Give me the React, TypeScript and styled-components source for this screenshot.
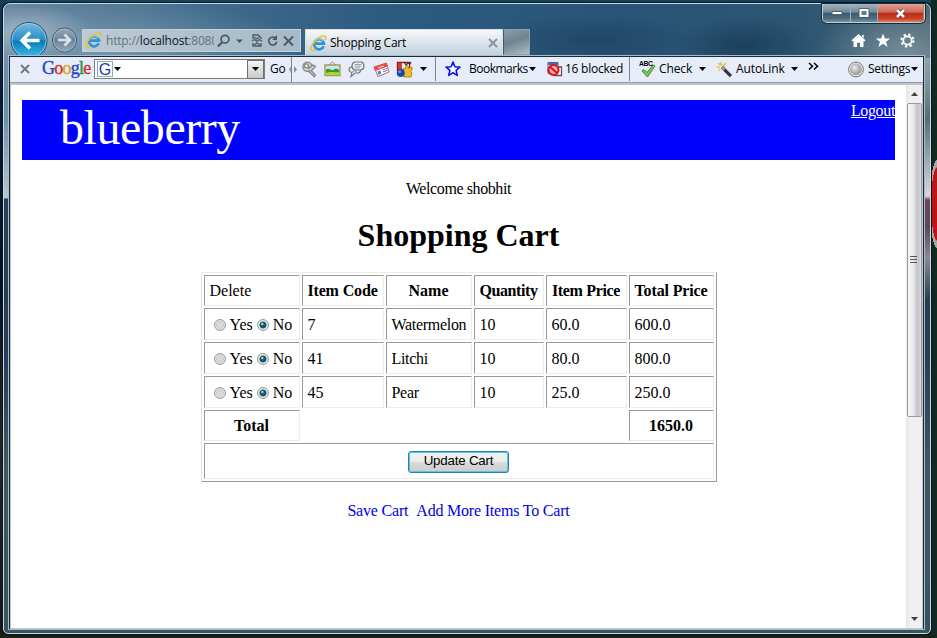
import React from 'react';
import styled, { createGlobalStyle, css } from 'styled-components';

const GlobalStyle = createGlobalStyle`
  *, *::before, *::after { box-sizing: border-box; }
  html, body { margin: 0; width: 937px; height: 638px; overflow: hidden; }
  svg { display: block; flex: none; }
`;

const Desktop = styled.div`
  width: 937px;
  height: 638px;
  padding: 3px 6px 4px 3px;
  background:
    radial-gradient(ellipse 7px 44px at 937px 204px, #c01318 0 82%, #a9a3a3 84% 100%, transparent 100%),
    linear-gradient(90deg, transparent 931px, #102a20 931px),
    linear-gradient(180deg, #12475d 0, #123854 6px, #0b1c38 90px, #07101f 280px, #28241e 440px, #191714 630px, #1b2117 638px);
`;

const Window = styled.div`
  width: 928px;
  height: 631px;
  display: flex;
  flex-direction: column;
  padding: 0 6px 5px 5px;
  border: 1px solid #c8dce5;
  border-radius: 7px 7px 5px 5px;
  box-shadow: 0 0 0 1px #071522;
  background:
    radial-gradient(ellipse 70px 28px at 20px 28px, rgba(176, 193, 205, .75), transparent),
    radial-gradient(ellipse 190px 50px at 110px 45px, rgba(153, 180, 199, .5), transparent),
    radial-gradient(ellipse 110px 26px at 590px 36px, rgba(22, 52, 82, .45), transparent),
    radial-gradient(ellipse 70px 30px at 740px 42px, rgba(12, 43, 65, .5), transparent),
    radial-gradient(ellipse 90px 60px at 900px 55px, rgba(152, 171, 181, .65), transparent),
    linear-gradient(90deg, #64849d 0, #416b8c 200px, #2d5b80 380px, #285577 620px, #2c5673 790px, #46616d 928px) 0 0 / 100% 54px no-repeat,
    linear-gradient(180deg, #83989c, #526e70 60px, #b9bfc4 118px, #dcd3da 138px, #6e4459 142px, #5c4a58 170px, #8e8793 200px, #2c454b 240px) 100% 54px / 7px 240px no-repeat,
    linear-gradient(180deg, #5d7e9c 0, #6d90aa 115px, #b7c7cd 194px, #293f58 195px, #273d54 350px, #44565f 465px, #36565b 631px);
`;

const TitleBar = styled.header`
  height: 52px;
  flex: none;
`;

const CaptionRow = styled.div`
  height: 20px;
  display: flex;
  justify-content: flex-end;
  margin-right: -1px;
`;

const CaptionButtons = styled.div`
  width: 103px;
  height: 19px;
  display: flex;
  border: 1px solid #bdcdd5;
  border-top: 0;
  border-radius: 0 0 5px 5px;
  overflow: hidden;
  box-shadow: 0 0 0 1px #172c3c;
`;

const CaptionButton = styled.span<{ $w: number; $close?: boolean }>`
  width: ${p => p.$w}px;
  flex: none;
  display: flex;
  align-items: center;
  justify-content: center;
  border-right: 1px solid ${p => (p.$close ? '#cc7b6f' : '#a0b2bc')};
  background: ${p => p.$close
    ? 'linear-gradient(180deg, #e0a497 0, #cf6752 46%, #b92d16 50%, #c93f26 80%, #df8061)'
    : 'linear-gradient(180deg, #a5b4bd 0, #71899a 46%, #395971 50%, #4b6c80 80%, #7994a1)'};
`;

const NavRow = styled.div`
  height: 32px;
  display: flex;
  align-items: flex-start;
  padding-left: 1px;
`;

const BackSlot = styled.div`
  width: 41px;
  height: 35px;
  overflow: hidden;
  margin-top: -3px;
`;

const ForwardSlot = styled.div`
  width: 31px;
  padding-top: 2px;
`;

const uiText = css`
  font-family: "Open Sans", "Noto Sans", sans-serif;
  font-size: 12px;
  line-height: 16px;
  white-space: pre;
`;

const AddressBar = styled.div`
  width: 219px;
  height: 23px;
  margin-top: 5px;
  border: 1px solid #c5d2da;
  display: flex;
  align-items: center;
  padding-left: 2px;
  background: linear-gradient(90deg, #bccbd5, #adc0ce 60%, #a7bac9);
`;

const Url = styled.div`
  ${uiText}
  width: 108px;
  margin-left: 4px;
  overflow: hidden;
  color: #66727c;
  letter-spacing: -0.2px;
  b { font-weight: 400; color: #10151a; }
`;

const BarIcons = styled.div`
  display: flex;
  align-items: center;
  margin-left: 2px;
`;

const Tab = styled.div`
  width: 198px;
  height: 27px;
  margin: 5px 0 0 4px;
  display: flex;
  align-items: center;
  padding: 0 4px 0 4px;
  border: 1px solid #d5e0e7;
  border-bottom: 0;
  background: linear-gradient(180deg, #f5f8fa 0, #dde6ee 45%, #c0cfdb 100%);
`;

const TabTitle = styled.span`
  ${uiText}
  flex: 1;
  margin-left: 3px;
  color: #000;
  letter-spacing: -0.25px;
`;

const NewTab = styled.div`
  width: 27px;
  height: 26px;
  margin-top: 5px;
  border: 1px solid #8da1af;
  border-left-color: #435b6c;
  background: linear-gradient(160deg, #8d9da9 0, #6e8290 45%, #b0bec6 100%);
`;

const BrowserIcons = styled.div`
  flex: 1;
  display: flex;
  justify-content: flex-end;
  gap: 9px;
  padding: 9px 9px 0 0;
`;

const Client = styled.div`
  width: 915px;
  height: 573px;
  flex: none;
  display: flex;
  flex-direction: column;
  border: 1px solid #142a3d;
  box-shadow: 0 0 0 1px #a9bdc8;
  background: #fff;
`;

const Toolbar = styled.div`
  height: 26px;
  flex: none;
  display: flex;
  align-items: center;
  background: #e6edf9;
  border-bottom: 1px solid #929aa4;
  padding: 0 0 1px 10px;
`;

const Slot = styled.div<{ $w: number }>`
  width: ${p => p.$w}px;
  flex: none;
  display: flex;
  align-items: center;
`;

const Label = styled.span<{ $ls?: number }>`
  ${uiText}
  color: #000;
  letter-spacing: ${p => p.$ls ?? -0.1}px;
`;

const GoogleWord = styled.span`
  font: 18px/20px "Liberation Serif", serif;
  -webkit-text-stroke: .4px currentColor;
  letter-spacing: -.75px;
  white-space: nowrap;
  margin-top: -2px;
`;

const Letter = styled.span<{ $c: string }>`
  color: ${p => p.$c};
`;

const SearchBox = styled.div`
  width: 171px;
  height: 20px;
  display: flex;
  align-items: center;
  border: 1px solid #7d7d7d;
  background: #fff;
  padding-left: 2px;
`;

const GBadge = styled.span`
  width: 16px;
  height: 16px;
  border: 1px solid #8fb795;
  border-left-color: #879ce0;
  font: 16px/15px "Liberation Sans", sans-serif;
  text-align: center;
  color: #1d38b8;
  margin-right: 1px;
`;

const DropButton = styled.span`
  width: 17px;
  height: 19px;
  margin-left: auto;
  display: flex;
  align-items: center;
  justify-content: center;
  border: 1px solid #707070;
  background: linear-gradient(180deg, #f3f3f3, #dedede 50%, #cacaca);
`;

const Separator = styled.i`
  width: 1px;
  height: 24px;
  background: #7d828b;
`;

const Viewport = styled.div`
  flex: 1;
  display: flex;
  border: 1px solid #c1c4c6;
  border-top: 2px solid #c1c4c6;
`;

const Page = styled.main`
  width: 895px;
  height: 542px;
  flex: none;
  padding: 15px 11px 0;
  background: #fff;
  color: #000;
  font: 16px/18px "Liberation Serif", serif;
  display: flex;
  flex-direction: column;
  align-items: center;
`;

const Banner = styled.div`
  width: 873px;
  height: 60px;
  flex: none;
  display: flex;
  justify-content: space-between;
  background: #00f;
  color: #fff;
  padding: 2px 0 0 38px;
`;

const Brand = styled.span`
  font-size: 48px;
  line-height: 52px;
  letter-spacing: -0.45px;
`;

const Logout = styled.a`
  text-decoration: underline;
  height: 18px;
  letter-spacing: -0.35px;
`;

const Welcome = styled.p`
  margin: 20px 0 0;
  letter-spacing: -0.4px;
`;

const Heading = styled.h1`
  margin: 19px 0 0;
  font-size: 32px;
  line-height: 37px;
`;

const CartTable = styled.div`
  width: 516px;
  height: 210px;
  flex: none;
  margin-top: 18px;
  padding: 2px;
  display: grid;
  grid-template-columns: 96px 82px 86px 70px 81px 85px;
  grid-template-rows: 31px 32px 32px 32px 31px 36px;
  gap: 2px;
  border: 1px solid;
  border-color: #ececec #999 #999 #e4e4e4;
`;

const Cell = styled.div<{ $head?: boolean; $span?: number; $bare?: boolean; $ls?: number }>`
  display: flex;
  align-items: center;
  white-space: pre;
  padding: 1px 5px 0;
  border: 1px solid;
  border-color: #999 #ececec #ececec #999;
  letter-spacing: ${p => p.$ls ?? 0}px;
  ${p => p.$head && css`font-weight: 700; justify-content: center;`}
  ${p => p.$span && css`grid-column: span ${p.$span};`}
  ${p => p.$bare && css`border-color: transparent;`}
`;

const Choice = styled.span`
  display: flex;
  align-items: center;
  gap: 4px;
  margin-left: 4px;
  & + & { margin-left: 4px; }
`;

const UpdateButton = styled.button`
  width: 101px;
  height: 22px;
  padding: 0 0 1px;
  border: 1px solid #2c7fa9;
  border-radius: 3px;
  box-shadow: inset 0 0 0 1px #54c6ec;
  background: linear-gradient(180deg, #f3f3f3 0, #ebebeb 48%, #dadada 50%, #cdcdcd);
  color: #000;
  font: 13.33px/18px "Liberation Sans", sans-serif;
  letter-spacing: -.2px;
`;

const CartLinks = styled.div`
  display: flex;
  gap: 8px;
  margin-top: 20px;
`;

const CartLink = styled.a`
  color: #0000e0;
  letter-spacing: -0.2px;
`;

const ScrollTrack = styled.div`
  width: 16px;
  height: 543px;
  flex: none;
  display: flex;
  flex-direction: column;
  align-items: center;
  background: linear-gradient(90deg, #e9e9e9, #f1f1f1 30%, #efefef);
`;

const ScrollArrow = styled.div`
  height: 18px;
  display: flex;
  align-items: center;
  justify-content: center;
`;

const ScrollThumb = styled.div`
  width: 15px;
  height: 314px;
  border: 1px solid #999;
  border-radius: 2px;
  display: flex;
  align-items: center;
  justify-content: center;
  background: linear-gradient(90deg, #f7f7f7, #e8e8ea 48%, #cfcfd5 55%, #c4c4cb 80%, #dedee2);
`;

const ScrollEnd = styled(ScrollArrow)`
  margin-top: auto;
`;

const Caret = ({ color = '#000' }: { color?: string }) => (
  <svg width="7" height="4" viewBox="0 0 7 4"><path d="M0 0h7L3.5 4z" fill={color} /></svg>
);

const Cross = ({ color }: { color: string }) => (
  <svg width="10" height="10" viewBox="0 0 10 10"><path d="M1 1l8 8M9 1L1 9" stroke={color} strokeWidth="1.9" /></svg>
);

const IeLogo = () => (
  <svg width="17" height="17" viewBox="0 0 17 17" fill="none">
    <path d="M13.7 11.2A5 5 0 1 1 14 8.6H5.5" stroke="#2d93d3" strokeWidth="2.6" />
    <path d="M4 8a5.2 5.2 0 0 1 9.2-2.2" stroke="#7cd0f5" strokeWidth="1.3" />
    <path d="M15.2 5.1C16.3 2.5 15.4.8 12.8 1 9 1.6 1.8 8.3 1.1 13c-.4 2.5 1.4 3.2 4.2 1.9" stroke="#edc02a" strokeWidth="1.6" />
  </svg>
);

const BackIcon = () => (
  <svg width="39" height="39" viewBox="0 0 39 39">
    <defs>
      <linearGradient id="back" x2="0" y2="1">
        <stop stopColor="#78bde0" /><stop offset=".47" stopColor="#278dc8" /><stop offset=".52" stopColor="#087bb9" /><stop offset="1" stopColor="#3fc3ef" />
      </linearGradient>
    </defs>
    <circle cx="19" cy="19.5" r="18" fill="url(#back)" stroke="#204c6d" />
    <circle cx="19" cy="19.5" r="17" fill="none" stroke="#a4d6ed" strokeWidth=".8" />
    <path d="M29.5 19.5H11.5M20 11.5l-8 8 8 8" fill="none" stroke="#fff" strokeWidth="3.5" />
  </svg>
);

const ForwardIcon = () => (
  <svg width="27" height="27" viewBox="0 0 27 27">
    <defs>
      <linearGradient id="forward" x2="0" y2="1"><stop stopColor="#9babb7" /><stop offset=".5" stopColor="#6b8498" /><stop offset="1" stopColor="#90aabd" /></linearGradient>
    </defs>
    <circle cx="13.5" cy="14" r="12" fill="url(#forward)" stroke="#435d72" />
    <circle cx="13.5" cy="14" r="11" fill="none" stroke="#b0c0cb" strokeWidth=".7" />
    <path d="M7 14h12M13.5 8.5L19 14l-5.5 5.5" fill="none" stroke="#dce4ea" strokeWidth="2.5" />
  </svg>
);

const AddressIcons = () => (
  <svg width="80" height="18" viewBox="0 0 80 18" fill="none" stroke="#4d5962" strokeWidth="1.7">
    <circle cx="9" cy="7.2" r="3.9" /><path d="M6.2 10.2L1.8 14.5" strokeWidth="2.2" />
    <path d="M20 7.5h7L23.5 11z" fill="#4d5962" stroke="none" />
    <path d="M37 7V3h5l3 2.5V7M37 11v3h8v-3" strokeWidth="1.3" /><path d="M36 9l2.5-1.5L41 9.5 43.5 7.5 46 9.3M38 5l3 2 2-2M38 13l3-2 3 2" strokeWidth="1.1" />
    <path d="M59.6 6.2A4 4 0 1 0 60.7 9.6" /><path d="M61 3v5h-5z" fill="#4d5962" stroke="none" />
    <path d="M68 4.5l9 9M77 4.5l-9 9" strokeWidth="1.9" />
  </svg>
);

const HomeIcon = () => (
  <svg width="15" height="15" viewBox="0 0 15 15"><path d="M7.5 1l7 6.2-1.2 1.2L12.5 8v6H9V9.8H6V14H2.5V8l-.8.5L.5 7.2zM11 2h1.7v3L11 3.5z" fill="#fff" /></svg>
);

const StarIcon = () => (
  <svg width="16" height="15" viewBox="0 0 16 15"><path d="M8 .5l1.9 5h5.4l-4.3 3.2 1.6 5.2L8 10.8l-4.6 3.1L5 8.7.7 5.5h5.4z" fill="#fff" /></svg>
);

const GearIcon = () => (
  <svg width="15" height="15" viewBox="0 0 15 15" fill="none" stroke="#fff">
    <circle cx="7.5" cy="7.5" r="6" strokeWidth="2.1" strokeDasharray="2.35 2.36" />
    <circle cx="7.5" cy="7.5" r="4.2" strokeWidth="1.8" />
  </svg>
);

const KeyIcon = () => (
  <svg width="17" height="17" viewBox="0 0 17 17" fill="#d2d2d2" stroke="#858585" strokeWidth="1.3">
    <path d="M8.5 8l6 6-1.2 1.8-6.8-6.5z" />
    <circle cx="6.5" cy="5.7" r="4.6" /><circle cx="5.5" cy="4.8" r="2" fill="#fff" /><path d="M7 8l5-4 2.5 1.5-4 4" />
  </svg>
);

const PhotoIcon = () => (
  <svg width="17" height="16" viewBox="0 0 17 16">
    <path d="M5 4l3.5-3L12 4" fill="none" stroke="#888" />
    <path d="M1 4h15v10.5H1z" fill="#c3e8f4" stroke="#a99c4b" strokeWidth="1.4" />
    <path d="M2 9c3-3 5 1 7 0 2-2 4-2 6 0v5H2z" fill="#37992e" /><path d="M2 12c4-2 8 0 13-1v3H2z" fill="#a8da32" />
  </svg>
);

const ChatIcon = () => (
  <svg width="17" height="17" viewBox="0 0 17 17" fill="#eef0f3" stroke="#6d747c" strokeWidth="1.1">
    <path d="M4.500 5.500h5.500c4 1 3 6 0 6.500H7l-4 3.500 1-4C0 10.500 0 6.500 4.500 5.500z" />
    <path d="M7 1h6c4 1 4 7 0 8H7C3 8 3 2 7 1z" />
    <path d="M6.500 3.500h7M6.500 5.200h7M7 7h5M4 10.300h5" stroke="#8a8f95" strokeWidth=".8" />
  </svg>
);

const CardIcon = () => (
  <svg width="17" height="15" viewBox="0 0 17 15">
    <path d="M1 5L13.500 1l2.500 9-11 4.500z" fill="#fff" stroke="#b5676a" /><path d="M1 5L13.500 1l1 3.600L2.300 9z" fill="#e84c42" />
    <path d="M4.500 9.600l3-1 .8 3.200-3 1z" fill="#577fcb" /><path d="M9.500 8l4.500-1.600M10 9.800l4.500-1.500" stroke="#8a6cae" /><path d="M5 6l6-2" stroke="#ffe0d8" />
  </svg>
);

const GadgetIcon = () => (
  <svg width="18" height="17" viewBox="0 0 18 17">
    <path d="M1.500 1.500h12v8h-12z" fill="#fff" stroke="#8d2118" strokeWidth="1.400" /><path d="M2 2h4v7H2z" fill="#d83a2e" />
    <path d="M7 7l2.500 1V5.500c2-2.500 3.500 0 2.500 2l4-1.500v3c-2 1-1.500 2 0 2.500l-1 4.500H8z" fill="#f2bc24" stroke="#a97112" strokeWidth=".8" />
    <circle cx="4.800" cy="12" r="4" fill="#1746b0" /><circle cx="3.700" cy="10.700" r="1.300" fill="#7ea9f0" />
    <path d="M8 1l2 3 2-2 2 1 1-2" fill="none" stroke="#333" strokeWidth="1.200" />
  </svg>
);

const BlueStar = () => (
  <svg width="16" height="16" viewBox="0 0 16 16"><path d="M8 1l1.900 4.700 5 .4-3.800 3.300 1.200 5L8 11.800l-4.300 2.600 1.200-5L1.100 6.100l5-.4z" fill="#fff" stroke="#0b13e0" strokeWidth="1.600" strokeLinejoin="round" /></svg>
);

const BlockedIcon = () => (
  <svg width="17" height="16" viewBox="0 0 17 16" fill="none">
    <path d="M2 1.500h10v11H2z" fill="#fff" stroke="#555f91" /><path d="M2 2h10v2H2z" fill="#4868bd" /><path d="M10 6h5.500v8.500H9z" fill="#fff" stroke="#714751" strokeWidth="1.300" />
    <circle cx="7.500" cy="9" r="5" fill="#f5b3ae" stroke="#d8161b" strokeWidth="2.100" /><path d="M4 5.700l7.500 6.800" stroke="#d8161b" strokeWidth="2.100" />
  </svg>
);

const CheckIcon = () => (
  <svg width="18" height="18" viewBox="0 0 18 18">
    <text x="0" y="6.200" fontFamily="Liberation Sans, sans-serif" fontSize="6.800" fontWeight="700" textLength="14">ABC</text>
    <path d="M3 11l2-1.500 3 3L14 5l2 1-7.500 11z" fill="#79c957" stroke="#357a2b" strokeWidth=".9" />
  </svg>
);

const WandIcon = () => (
  <svg width="17" height="17" viewBox="0 0 17 17" fill="none">
    <path d="M6 6l9 9" stroke="#333" strokeWidth="3.400" /><path d="M6 6l2.500 2.500" stroke="#999" strokeWidth="3.400" /><path d="M9 7l6.500 6.500" stroke="#9a9a9a" />
    <path d="M5 1v4M1 6h3M8 3L7 5M2 2l2 2M3 10l1-2M10 2L8 4" stroke="#e2c544" strokeWidth="1.500" />
  </svg>
);

const OrbIcon = () => (
  <svg width="17" height="17" viewBox="0 0 17 17">
    <defs><radialGradient id="orb" cx=".38" cy=".35"><stop stopColor="#efefef" /><stop offset="1" stopColor="#a6a6a6" /></radialGradient></defs>
    <circle cx="8" cy="8.500" r="7.400" fill="#e9e9e9" stroke="#777" /><circle cx="8" cy="8.500" r="5.600" fill="url(#orb)" stroke="#aaa" strokeWidth=".7" />
  </svg>
);

const Radio = ({ on }: { on?: boolean }) => (
  <svg width="12" height="12" viewBox="0 0 12 12">
    <circle cx="6" cy="6" r="5.400" fill="#f7f7f7" stroke="#858b91" />
    <circle cx="6" cy="6" r="3.700" fill={on ? '#e2eaef' : '#d9dadb'} stroke="#bbc0c3" strokeWidth=".7" />
    {on && <><circle cx="6" cy="6" r="3" fill="#155a7b" stroke="#153951" strokeWidth=".8" /><circle cx="5.300" cy="5" r="1.200" fill="#8ddcf0" /></>}
  </svg>
);

const googleLetters: [string, string][] = [['G', '#2449c8'], ['o', '#d22f2d'], ['o', '#d9a51d'], ['g', '#2449c8'], ['l', '#20923b'], ['e', '#d22f2d']];
const headings: [string, number][] = [['Item Code', -0.15], ['Name', 0], ['Quantity', -0.4], ['Item Price', -0.35], ['Total Price', -0.15]];
const items = [
  ['7', 'Watermelon', '10', '60.0', '600.0'],
  ['41', 'Litchi', '10', '80.0', '800.0'],
  ['45', 'Pear', '10', '25.0', '250.0'],
];

const GoogleToolbar = () => (
  <Toolbar>
    <Slot $w={22}><Cross color="#777" /></Slot>
    <Slot $w={52}><GoogleWord>{googleLetters.map(([ch, c], i) => <Letter key={i} $c={c}>{ch}</Letter>)}</GoogleWord></Slot>
    <Slot $w={176}>
      <SearchBox><GBadge>G</GBadge><Caret /><DropButton><Caret /></DropButton></SearchBox>
    </Slot>
    <Slot $w={19}><Label>Go</Label></Slot>
    <Slot $w={12}>
      <svg width="8" height="25" viewBox="0 0 8 25"><path d="M2.500 0v25" stroke="#7d828b" /><path d="M1.800 9v7L0 12.500zM5 9v7l3-3.500z" fill="#8b8d93" /></svg>
    </Slot>
    <Slot $w={23}><KeyIcon /></Slot>
    <Slot $w={24}><PhotoIcon /></Slot>
    <Slot $w={25}><ChatIcon /></Slot>
    <Slot $w={23}><CardIcon /></Slot>
    <Slot $w={24}><GadgetIcon /></Slot>
    <Slot $w={15}><Caret /></Slot>
    <Slot $w={10}><Separator /></Slot>
    <Slot $w={24}><BlueStar /></Slot>
    <Slot $w={60}><Label $ls={-0.5}>Bookmarks</Label></Slot>
    <Slot $w={17}><Caret /></Slot>
    <Slot $w={19}><BlockedIcon /></Slot>
    <Slot $w={64}><Label $ls={-0.25}>16 blocked</Label></Slot>
    <Slot $w={10}><Separator /></Slot>
    <Slot $w={20}><CheckIcon /></Slot>
    <Slot $w={40}><Label>Check</Label></Slot>
    <Slot $w={17}><Caret /></Slot>
    <Slot $w={20}><WandIcon /></Slot>
    <Slot $w={55}><Label>AutoLink</Label></Slot>
    <Slot $w={17}><Caret /></Slot>
    <Slot $w={40}>
      <svg width="11" height="15" viewBox="0 0 11 15"><path d="M1 1l3.500 3.200L1 7.500M6 1l3.500 3.200L6 7.500" fill="none" stroke="#000" strokeWidth="1.500" /></svg>
    </Slot>
    <Slot $w={20}><OrbIcon /></Slot>
    <Slot $w={43}><Label $ls={-0.3}>Settings</Label></Slot>
    <Caret />
  </Toolbar>
);

export default function App() {
  return (
    <>
      <GlobalStyle />
      <Desktop>
        <Window>
          <TitleBar>
            <CaptionRow>
              <CaptionButtons>
                <CaptionButton $w={28}><svg width="12" height="6"><path d="M1 1.500h10v3H1z" fill="#fff" stroke="#52616b" /></svg></CaptionButton>
                <CaptionButton $w={27}><svg width="12" height="10"><path d="M2.500 2h7v6h-7z" fill="none" stroke="#465864" strokeWidth="3.500" /><path d="M2.500 2h7v6h-7z" fill="#637c8c" stroke="#fff" strokeWidth="2" /></svg></CaptionButton>
                <CaptionButton $w={46} $close><svg width="13" height="11" viewBox="0 0 13 11"><path d="M3 2l7 7M10 2L3 9" stroke="#723b35" strokeWidth="4.500" /><path d="M3 2l7 7M10 2L3 9" stroke="#fff" strokeWidth="2.500" /></svg></CaptionButton>
              </CaptionButtons>
            </CaptionRow>
            <NavRow>
              <BackSlot><BackIcon /></BackSlot>
              <ForwardSlot><ForwardIcon /></ForwardSlot>
              <AddressBar>
                <IeLogo />
                <Url>http://<b>localhost</b>:8080</Url>
                <BarIcons><AddressIcons /></BarIcons>
              </AddressBar>
              <Tab><IeLogo /><TabTitle>Shopping Cart</TabTitle><Cross color="#8a949c" /></Tab>
              <NewTab />
              <BrowserIcons><HomeIcon /><StarIcon /><GearIcon /></BrowserIcons>
            </NavRow>
          </TitleBar>
          <Client>
            <GoogleToolbar />
            <Viewport>
              <Page>
                <Banner><Brand>blueberry</Brand><Logout>Logout</Logout></Banner>
                <Welcome>Welcome shobhit</Welcome>
                <Heading>Shopping Cart</Heading>
                <CartTable>
                  <Cell>Delete</Cell>
                  {headings.map(([h, ls]) => <Cell key={h} $head $ls={ls}>{h}</Cell>)}
                  {items.map(row => (
                    <React.Fragment key={row[0]}>
                      <Cell><Choice><Radio />Yes</Choice><Choice><Radio on />No</Choice></Cell>
                      {row.map((v, i) => <Cell key={i} $ls={i === 1 ? -0.3 : 0}>{v}</Cell>)}
                    </React.Fragment>
                  ))}
                  <Cell $head>Total</Cell>
                  <Cell $bare $span={4} />
                  <Cell $head>1650.0</Cell>
                  <Cell $head $span={6}><UpdateButton>Update Cart</UpdateButton></Cell>
                </CartTable>
                <CartLinks><CartLink>Save Cart</CartLink><CartLink>Add More Items To Cart</CartLink></CartLinks>
              </Page>
              <ScrollTrack>
                <ScrollArrow><svg width="7" height="4"><path d="M0 4h7L3.500 0z" fill="#444" /></svg></ScrollArrow>
                <ScrollThumb><svg width="8" height="8"><path d="M0 .5h7M0 3.500h7M0 6.500h7" stroke="#555" /></svg></ScrollThumb>
                <ScrollEnd><Caret color="#444" /></ScrollEnd>
              </ScrollTrack>
            </Viewport>
          </Client>
        </Window>
      </Desktop>
    </>
  );
}
